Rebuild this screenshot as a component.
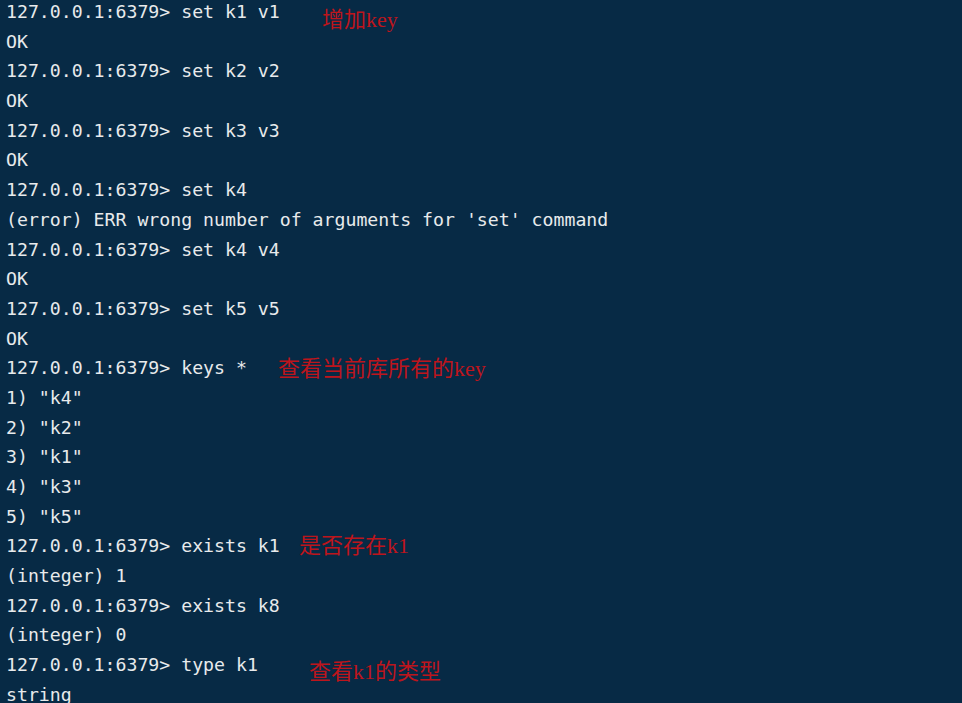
const lines = [
  '127.0.0.1:6379> set k1 v1',
  'OK',
  '127.0.0.1:6379> set k2 v2',
  'OK',
  '127.0.0.1:6379> set k3 v3',
  'OK',
  '127.0.0.1:6379> set k4',
  "(error) ERR wrong number of arguments for 'set' command",
  '127.0.0.1:6379> set k4 v4',
  'OK',
  '127.0.0.1:6379> set k5 v5',
  'OK',
  '127.0.0.1:6379> keys *',
  '1) "k4"',
  '2) "k2"',
  '3) "k1"',
  '4) "k3"',
  '5) "k5"',
  '127.0.0.1:6379> exists k1',
  '(integer) 1',
  '127.0.0.1:6379> exists k8',
  '(integer) 0',
  '127.0.0.1:6379> type k1',
  'string',
];

// red notes drawn over the terminal
const notes = [
  { text: '增加key', cls: 'left-[322px] top-[6px]' },
  { text: '查看当前库所有的key', cls: 'left-[278px] top-[355px]' },
  { text: '是否存在k1', cls: 'left-[299px] top-[532px]' },
  { text: '查看k1的类型', cls: 'left-[309px] top-[658px]' },
];

export default function App() {
  return (
    <div className="relative w-[962px] h-[703px] overflow-hidden bg-[#072a45]">
      <div className="-mt-[3px] pl-[6px] font-['DejaVu_Sans_Mono',monospace] text-[18.2px] leading-[29.68px] text-[#e8eaec] whitespace-pre">
        {lines.map((l, i) => (
          <div key={i}>{l}</div>
        ))}
      </div>
      {notes.map((n) => (
        <div
          key={n.text}
          className={`absolute ${n.cls} font-['Liberation_Serif','Noto_Sans_CJK_SC',serif] text-[22px] leading-[28px] text-[#bd151c] whitespace-nowrap`}
        >
          {n.text}
        </div>
      ))}
    </div>
  );
}
